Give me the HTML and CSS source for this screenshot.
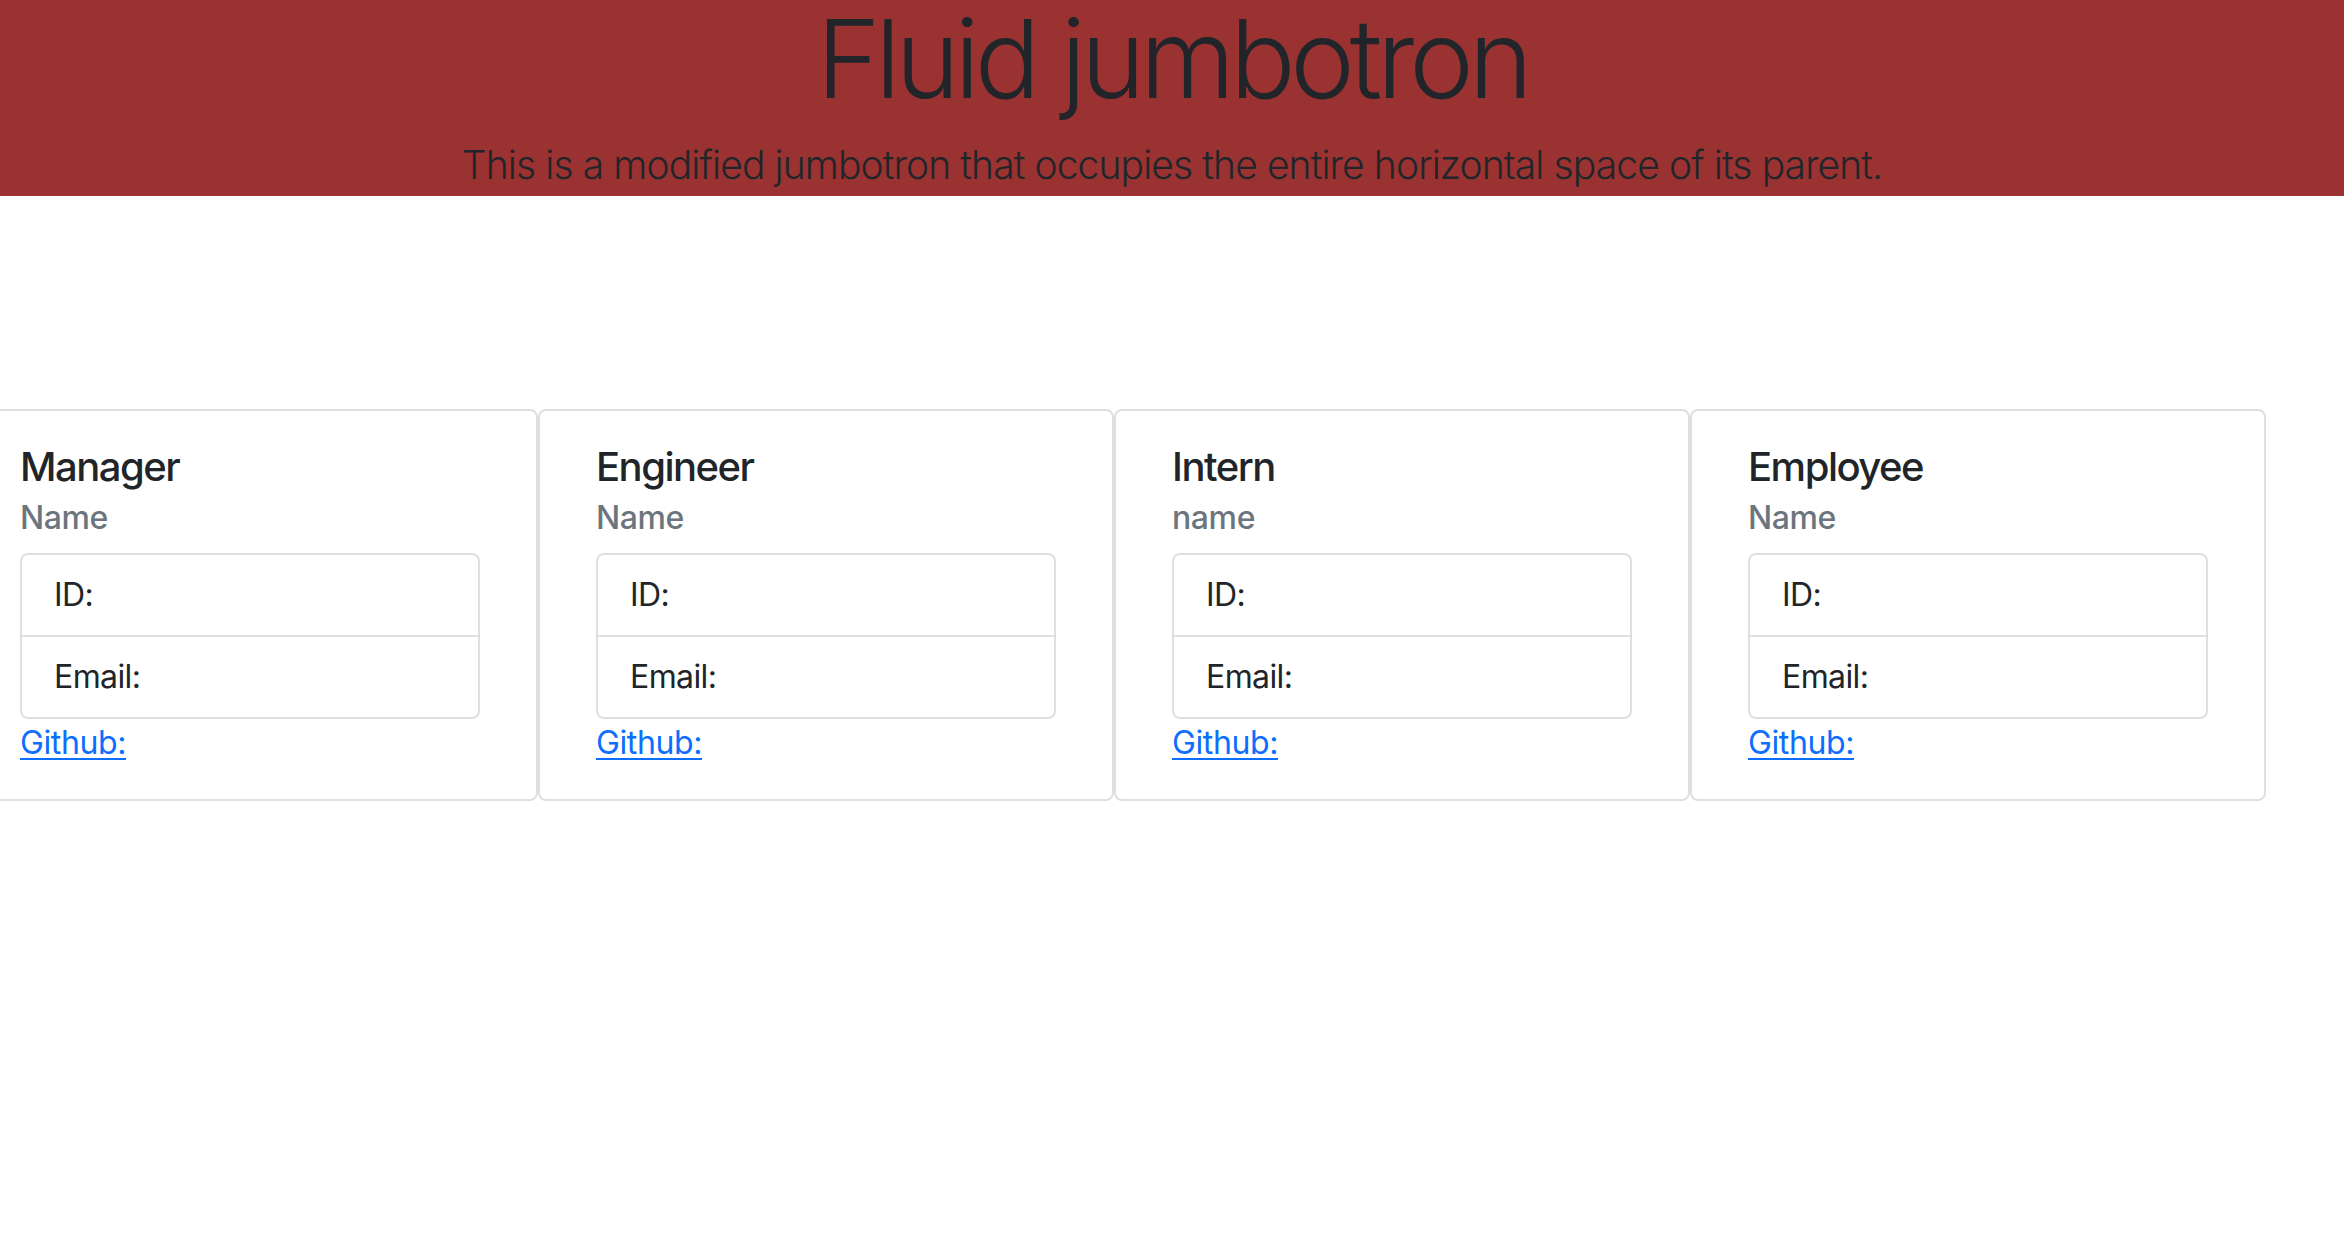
FILE: index.html
```html
<!DOCTYPE html>
<html lang="en">
<head>
<meta charset="utf-8">
<title>Team</title>
<link rel="stylesheet" href="styles.css">
</head>
<body>
<header class="jumbotron">
  <h1 class="display">Fluid jumbotron</h1>
  <p class="lead">This is a modified jumbotron that occupies the entire horizontal space of its parent.</p>
</header>
<main class="cards">
  <section class="card">
    <h5 class="card-title">Manager</h5>
    <h6 class="card-subtitle">Name</h6>
    <ul class="list-group">
      <li class="list-item">ID:</li>
      <li class="list-item">Email:</li>
    </ul>
    <a href="#" class="card-link">Github:</a>
  </section>
  <section class="card">
    <h5 class="card-title">Engineer</h5>
    <h6 class="card-subtitle">Name</h6>
    <ul class="list-group">
      <li class="list-item">ID:</li>
      <li class="list-item">Email:</li>
    </ul>
    <a href="#" class="card-link">Github:</a>
  </section>
  <section class="card">
    <h5 class="card-title">Intern</h5>
    <h6 class="card-subtitle">name</h6>
    <ul class="list-group">
      <li class="list-item">ID:</li>
      <li class="list-item">Email:</li>
    </ul>
    <a href="#" class="card-link">Github:</a>
  </section>
  <section class="card">
    <h5 class="card-title">Employee</h5>
    <h6 class="card-subtitle">Name</h6>
    <ul class="list-group">
      <li class="list-item">ID:</li>
      <li class="list-item">Email:</li>
    </ul>
    <a href="#" class="card-link">Github:</a>
  </section>
</main>
</body>
</html>
```

FILE: styles.css
```css
* { box-sizing: border-box; }
html, body { margin: 0; padding: 0; }
body {
  font-family: Inter, "Liberation Sans", sans-serif;
  color: #212529;
  background: #fff;
  font-size: 32px;
  line-height: 1.5;
  overflow: hidden;
}
.jumbotron {
  background: #993231;
  height: 196px;
  padding-top: 4px;
  text-align: center;
}
.display {
  margin: 0;
  font-size: 109px;
  font-weight: 300;
  line-height: 1;
  letter-spacing: -5.2px;
}
.lead {
  margin: 25px 0 0;
  font-size: 39px;
  font-weight: 300;
  line-height: 1.4;
  letter-spacing: -0.9px;
}
.cards {
  display: flex;
  margin-top: 213px;
  margin-left: -38px;
}
.card {
  flex: 0 0 576px;
  width: 576px;
  border: 2px solid #dfdfdf;
  border-radius: 8px;
  padding: 32px 56px 32px 56px;
}
.card-title {
  margin: 0 0 16px;
  font-size: 40px;
  font-weight: 500;
  line-height: 1.2;
  letter-spacing: -1.5px;
}
.card-subtitle {
  margin: -8px 0 16px;
  font-size: 32px;
  font-weight: 500;
  line-height: 1.2;
  color: #6c757d;
  letter-spacing: -0.4px;
}
.list-group {
  list-style: none;
  margin: 0;
  padding: 0;
  border: 2px solid #dfdfdf;
  border-radius: 8px;
}
.list-item {
  padding: 16px 32px;
  line-height: 48px;
  letter-spacing: -0.6px;
}
.list-item + .list-item {
  border-top: 2px solid #dfdfdf;
}
.card-link {
  display: inline-block;
  color: #0d6efd;
  text-decoration: underline;
  text-decoration-thickness: 2px;
  text-underline-offset: 4px;
  line-height: 48px;
  letter-spacing: -0.4px;
}
```
